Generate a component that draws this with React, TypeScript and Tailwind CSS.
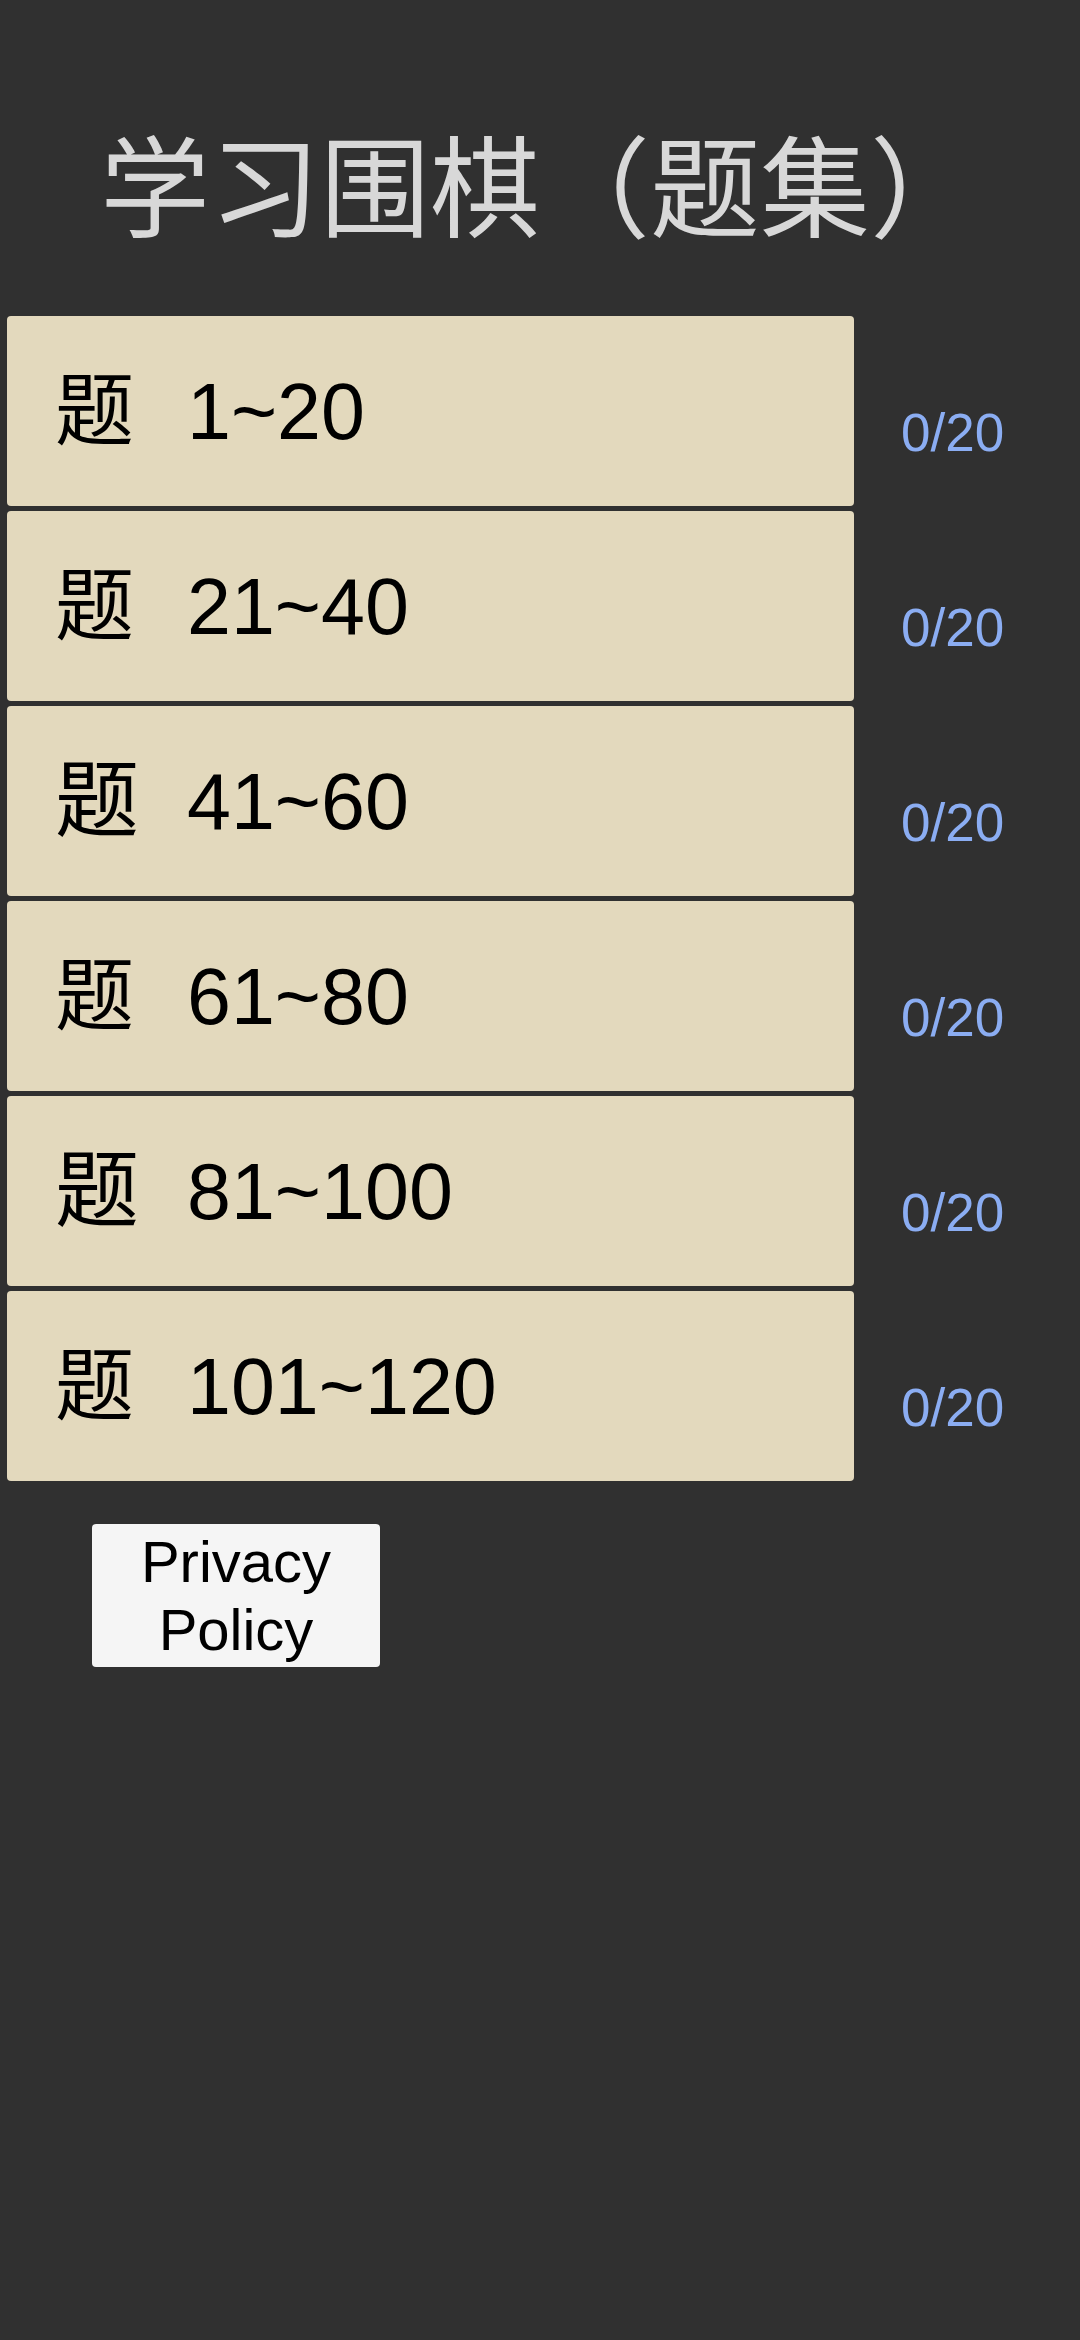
const sets = [
  { range: "1~20", big: false },
  { range: "21~40", big: false },
  { range: "41~60", big: true },
  { range: "61~80", big: false },
  { range: "81~100", big: true },
  { range: "101~120", big: false },
];

function SetRow({ range, big }: { range: string; big: boolean }) {
  return (
    <div className="flex items-center">
      <button className="ml-[7px] flex h-[190px] w-[847px] items-center rounded-[4px] bg-[#e3d9bd] pl-[48px] text-left text-black">
        <span
          className={
            big
              ? "w-[80px] whitespace-nowrap text-[84px] leading-none"
              : "w-[80px] whitespace-nowrap text-[79px] leading-none"
          }
        >
          题
        </span>
        <span className="ml-[52px] text-[79px] leading-none">{range}</span>
      </button>
      <span className="ml-[47px] mt-[42px] text-[53px] leading-none text-[#8badf2]">0/20</span>
    </div>
  );
}

export default function App() {
  return (
    <div
      className="min-h-[2340px] w-[1080px] bg-[#303030]"
      style={{ fontFamily: '"Liberation Sans", "Noto Sans CJK SC", sans-serif' }}
    >
      <h1 className="pt-[136px] text-center text-[110px] leading-none text-[#d8d8d8]">学习围棋（题集）</h1>

      <div className="mt-[70px] flex flex-col gap-[5px]">
        {sets.map((s) => (
          <SetRow key={s.range} range={s.range} big={s.big} />
        ))}
      </div>

      <button className="ml-[92px] mt-[43px] flex h-[143px] w-[288px] flex-col items-center justify-center rounded-[4px] bg-[#f5f5f5] text-[58px] leading-[68px] text-black">
        <span>Privacy</span>
        <span>Policy</span>
      </button>
    </div>
  );
}
